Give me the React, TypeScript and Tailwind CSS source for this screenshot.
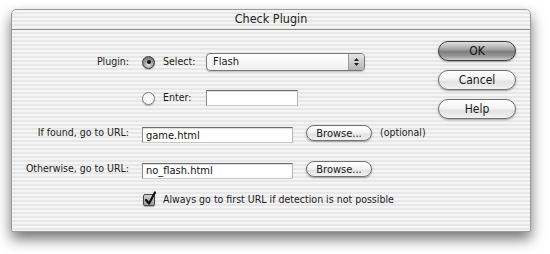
import React from "react";

const stripes =
  "bg-[repeating-linear-gradient(to_bottom,#f5f5f5_0px,#f5f5f5_2px,#e7e7e7_2px,#e7e7e7_4px)]";

function AquaButton({ label, primary, className }: { label: string; primary?: boolean; className?: string }) {
  return (
    <div
      className={
        "flex items-center justify-center rounded-full border leading-none shadow-[0_1px_2px_rgba(0,0,0,0.35)] " +
        (primary
          ? "border-[#3c3c3c] bg-[linear-gradient(to_bottom,#e2e2e2_0%,#a4a4a4_40%,#7c7c7c_55%,#9a9a9a_80%,#cfcfcf_100%)] text-[#111] "
          : "border-[#707070] bg-[linear-gradient(to_bottom,#ffffff_0%,#f4f4f4_45%,#e2e2e2_60%,#f2f2f2_100%)] text-[#1a1a1a] ") +
        (className ?? "")
      }
    >
      {label}
    </div>
  );
}

function Radio({ on }: { on?: boolean }) {
  return (
    <div
      className={
        "flex h-[13px] w-[13px] shrink-0 items-center justify-center rounded-full border shadow-[0_1px_1px_rgba(0,0,0,0.25)] " +
        (on
          ? "border-[#3a3a3a] bg-[radial-gradient(circle_at_50%_70%,#e0e0e0_0%,#8a8a8a_60%,#5e5e5e_100%)]"
          : "border-[#7a7a7a] bg-[linear-gradient(to_bottom,#f4f4f4,#ffffff)]")
      }
    >
      {on && <div className="h-[4px] w-[4px] rounded-full bg-[#111]" />}
    </div>
  );
}

function Field({ value, className }: { value?: string; className?: string }) {
  return (
    <div
      className={
        "flex h-[16px] items-center border border-t-[#6c6c6c] border-l-[#8a8a8a] border-r-[#b8b8b8] border-b-[#c8c8c8] bg-white pl-[3px] text-[11px] leading-none text-[#111] shadow-[inset_0_1px_1px_rgba(0,0,0,0.15)] " +
        (className ?? "")
      }
    >
      {value}
    </div>
  );
}

export default function App() {
  return (
    <div
      className="h-[254px] w-[550px] overflow-hidden bg-white pl-[11px] pt-[9px] text-[#1c1c1c]"
      style={{ fontFamily: '"Lucida Grande", "DejaVu Sans Condensed", "DejaVu Sans", sans-serif' }}
    >
      <div className="flex h-[223px] w-[520px] flex-col rounded-t-[5px] border border-[#9a9a9a] shadow-[0_7px_14px_rgba(0,0,0,0.55)]">
        {/* title bar */}
        <div className={"flex h-[20px] shrink-0 items-center justify-center rounded-t-[5px] border-b border-[#8c8c8c] text-[12.5px] text-[#222] " + stripes}>
          Check Plugin
        </div>

        {/* body */}
        <div className={"flex flex-1 text-[10.5px] " + stripes}>
          <div className="flex flex-1 flex-col">
            {/* plugin select */}
            <div className="mt-[22px] flex h-[20px] items-center">
              <div className="w-[117px] text-right">Plugin:</div>
              <div className="ml-[13px]"><Radio on /></div>
              <div className="ml-[8px] w-[43px]">Select:</div>
              <div className="flex h-[18px] w-[159px] items-stretch overflow-hidden rounded-[4px] border border-[#777] bg-[linear-gradient(to_bottom,#ffffff,#f0f0f0)] shadow-[0_1px_1px_rgba(0,0,0,0.2)]">
                <div className="flex flex-1 items-center pl-[6px] text-[11px]">Flash</div>
                <div className="flex w-[16px] flex-col items-center justify-center gap-[2px] border-l border-[#999] bg-[linear-gradient(to_bottom,#e6e6e6,#b4b4b4)]">
                  <svg width="5" height="3" viewBox="0 0 5 3"><path d="M2.5 0L5 3H0z" fill="#222" /></svg>
                  <svg width="5" height="3" viewBox="0 0 5 3"><path d="M0 0H5L2.5 3z" fill="#222" /></svg>
                </div>
              </div>
            </div>

            {/* enter */}
            <div className="mt-[18px] flex h-[16px] items-center">
              <div className="w-[117px]" />
              <div className="ml-[13px]"><Radio /></div>
              <div className="ml-[8px] w-[43px]">Enter:</div>
              <Field className="w-[92px]" />
            </div>

            {/* if found */}
            <div className="mt-[17px] flex h-[20px] items-center">
              <div className="w-[117px] text-right">If found, go to URL:</div>
              <Field value="game.html" className="ml-[13px] mt-[4px] w-[151px]" />
              <AquaButton label="Browse..." className="ml-[13px] h-[16px] w-[66px] text-[11px]" />
              <div className="ml-[8px]">(optional)</div>
            </div>

            {/* otherwise */}
            <div className="mt-[16px] flex h-[20px] items-center">
              <div className="w-[117px] text-right">Otherwise, go to URL:</div>
              <Field value="no_flash.html" className="ml-[13px] mt-[3px] w-[151px]" />
              <AquaButton label="Browse..." className="ml-[13px] h-[16px] w-[66px] text-[11px]" />
            </div>

            {/* checkbox */}
            <div className="mt-[14px] flex h-[14px] items-center">
              <div className="relative ml-[131px] h-[12px] w-[12px] rounded-[2px] border border-[#4a4a4a] bg-[linear-gradient(to_bottom,#cfcfcf,#9c9c9c)] shadow-[0_1px_1px_rgba(0,0,0,0.3)]">
                <svg className="absolute left-[0px] top-[-4px]" width="13" height="15" viewBox="0 0 13 15">
                  <path d="M2 9 L5 12.5 L11 1.5" fill="none" stroke="#111" strokeWidth="2.2" strokeLinecap="round" strokeLinejoin="round" />
                </svg>
              </div>
              <div className="ml-[8px]">Always go to first URL if detection is not possible</div>
            </div>
          </div>

          {/* buttons */}
          <div className="mr-[14px] mt-[11px] flex w-[78px] flex-col gap-[9px] text-[12px]">
            <AquaButton label="OK" primary className="h-[20px]" />
            <AquaButton label="Cancel" className="h-[20px]" />
            <AquaButton label="Help" className="h-[20px]" />
          </div>
        </div>
      </div>
    </div>
  );
}
